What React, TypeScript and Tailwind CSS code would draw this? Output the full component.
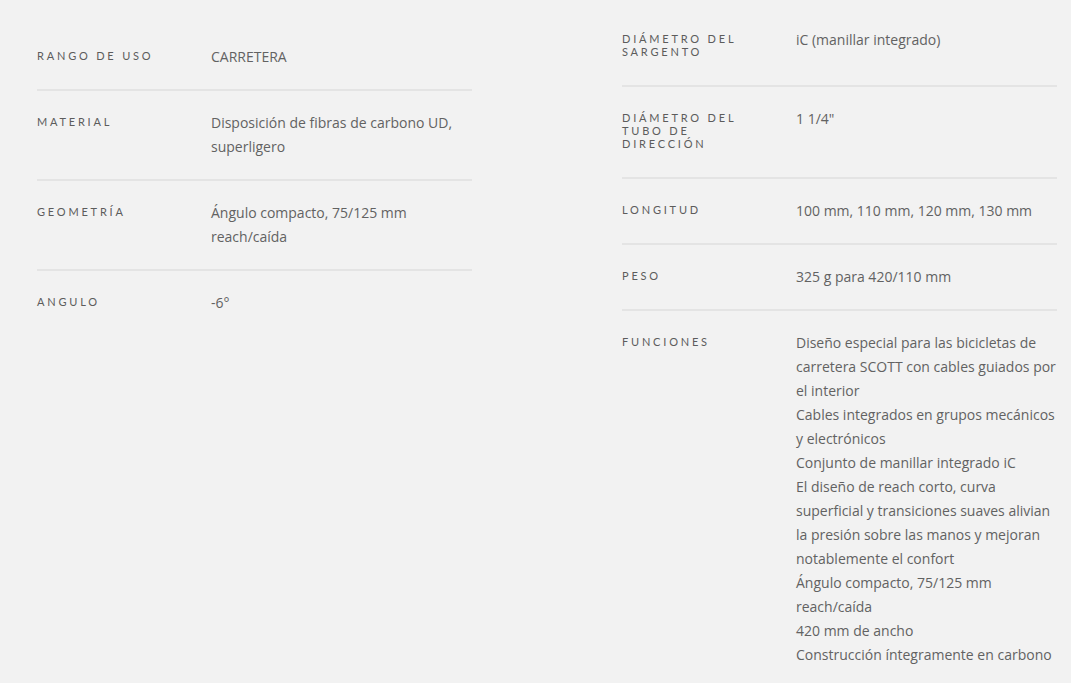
// Spec sheet for a road handlebar/stem, two columns of label/value rows.
type Spec = { label: string; value: string[] };

const left: Spec[] = [
  { label: "Rango de uso", value: ["CARRETERA"] },
  { label: "Material", value: ["Disposición de fibras de carbono UD, superligero"] },
  { label: "Geometría", value: ["Ángulo compacto, 75/125 mm reach/caída"] },
  { label: "Angulo", value: ["-6°"] },
];

const right: Spec[] = [
  { label: "Diámetro del sargento", value: ["iC (manillar integrado)"] },
  { label: "Diámetro del tubo de dirección", value: ['1 1/4"'] },
  { label: "Longitud", value: ["100 mm, 110 mm, 120 mm, 130 mm"] },
  { label: "Peso", value: ["325 g para 420/110 mm"] },
  {
    label: "Funciones",
    value: [
      "Diseño especial para las bicicletas de carretera SCOTT con cables guiados por el interior",
      "Cables integrados en grupos mecánicos y electrónicos",
      "Conjunto de manillar integrado iC",
      "El diseño de reach corto, curva superficial y transiciones suaves alivian la presión sobre las manos y mejoran notablemente el confort",
      "Ángulo compacto, 75/125 mm reach/caída",
      "420 mm de ancho",
      "Construcción íntegramente en carbono",
    ],
  },
];

function Row({ spec, last }: { spec: Spec; last: boolean }) {
  return (
    <div className={last ? "flex py-5" : "flex border-b-2 border-[#e4e4e4] py-5"}>
      <div className="w-[174px] shrink-0 pr-10 pt-[4px] pb-[7px] font-['Lato',sans-serif] text-[11px] leading-[13px] uppercase tracking-[2.8px] text-[#5c5c5c]">
        {spec.label}
      </div>
      <div className="flex-1 font-['Open_Sans',sans-serif] text-[14px] leading-6 text-[#626262]">
        {spec.value.map((v) => (
          <div key={v}>{v}</div>
        ))}
      </div>
    </div>
  );
}

export default function App() {
  return (
    <div className="flex min-h-[683px] w-full gap-[150px] bg-[#f2f2f2] pl-[37px]">
      <div className="w-[435px] pt-[25px]">
        {left.map((s, i) => (
          <Row key={s.label} spec={s} last={i === left.length - 1} />
        ))}
      </div>
      <div className="w-[435px] pt-2">
        {right.map((s, i) => (
          <Row key={s.label} spec={s} last={i === right.length - 1} />
        ))}
      </div>
    </div>
  );
}
